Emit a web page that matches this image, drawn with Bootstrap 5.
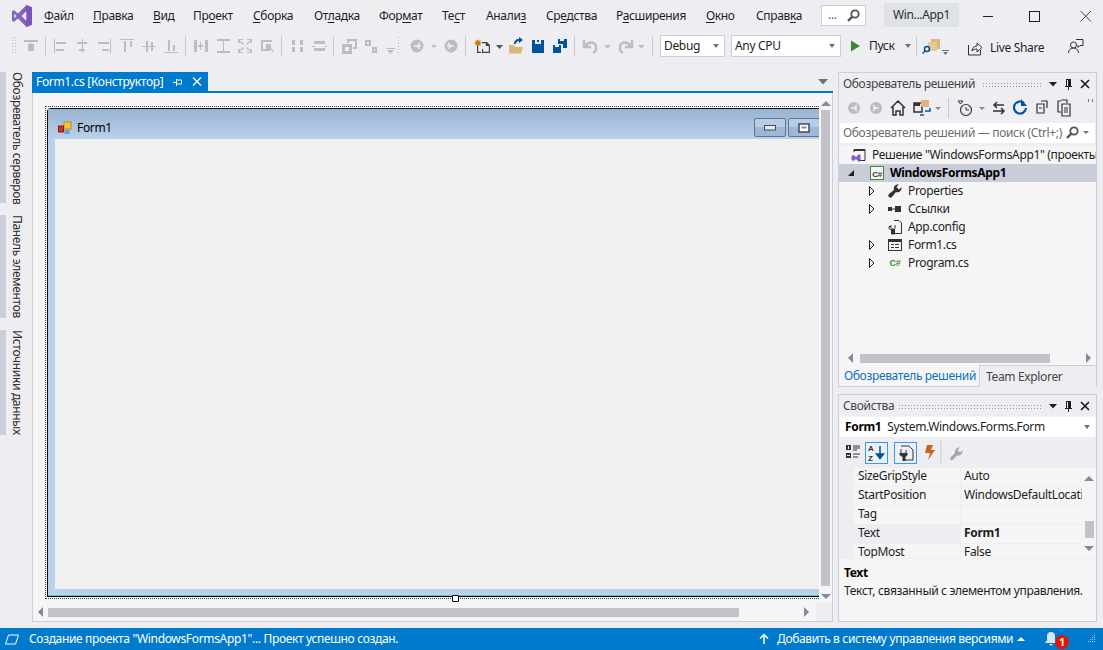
<!DOCTYPE html>
<html lang="ru"><head><meta charset="utf-8"><title>VS</title>
<link rel="stylesheet" href="https://cdn.jsdelivr.net/npm/bootstrap@5.3.0/dist/css/bootstrap.min.css">
<style>
html,body{height:650px;overflow:hidden;background:#eeeef2;}
body{font:12px/16px "Noto Sans",sans-serif;letter-spacing:-.34px;color:#1e1e1e;}
svg{display:block;flex:none;}
.vs-app{height:650px;}
.menu-row{height:32px;}
.logo-cell{width:44px;padding-left:12px;}
.menu-grid{display:grid;grid-template-columns:49px 60px 40px 60px 61px 65px 63px 44px 60px 70px 90px 50px 65px;width:777px;}
.menu-grid u{text-underline-offset:2px;text-decoration-thickness:1px;}
.search-mini{width:45px;height:21px;background:#fff;border:1px solid #cccedb;padding-left:6px;padding-right:5px;margin-top:-2px;color:#555;}
.sln-name{width:75px;height:24px;background:#dfe3e6;margin-left:18px;color:#2d2d30;margin-top:-2px;}
.win-btns{margin-left:24px;}
.tool-row{height:28px;}
.combo{height:22px;background:#fff;border:1px solid #cccedb;padding:0 5px 0 3px;}
.combo-debug{width:65px;margin-left:0;}
.combo-cpu{width:110px;margin-left:6px;}
.caret-g{width:0;height:0;border-left:3.5px solid transparent;border-right:3.5px solid transparent;border-top:4px solid #717171;flex:none;}
.caret-w{width:0;height:0;border-left:4px solid transparent;border-right:4px solid transparent;border-bottom:4px solid #fff;flex:none;}
.run-lbl{margin-left:8px;width:36px;}
.ls-lbl{margin-left:7px;width:78px;}
.main-row{height:550px;margin-top:12px;}
.side-tabs{width:32px;}
.side-item{display:flex;}
.side-strip{width:6px;background:#cccedb;}
.side-txt{writing-mode:vertical-rl;margin-left:5px;line-height:13px;white-space:nowrap;color:#2d2d30;}
.side-a{height:131px;}.side-b{height:103px;margin-top:12px;}.side-c{height:105px;margin-top:12px;}
.doc-pane{width:801px;}
.doc-head{height:19px;}
.doc-tab{width:176px;background:#007acc;color:#fff;padding-left:4px;}
.doc-tab span{width:137px;white-space:nowrap;}
.doc-line{height:2px;background:#007acc;}
.doc-body{height:529px;background:#f5f5f5;border:1px solid #cccedb;border-top:0;}
.canvas-zone{height:510px;padding:13px 0 0 12px;overflow:hidden;}
.select-box{width:900px;height:493px;border:1px dotted #444;padding:1px;}
.frame-win{height:489px;border:1px solid #111;border-radius:4px 0 0 0;background:#b9d1ea;padding:0 6px 6px 7px;border-bottom-color:#000;box-shadow:inset 0 -1px 0 #55c8d8;}
.frame-title{height:30px;margin:0 -6px 0 -7px;padding:7px 0 0 10px;background:linear-gradient(#99b4d1,#b9d1ea);color:#000;}
.frame-title span{margin-left:5px;}
.frame-client{height:450px;background:#f0f0f0;}
.cap-btns{padding-left:642px;}
.cap-btn{width:32px;height:19px;border:1px solid #5f7396;border-radius:2px;background:linear-gradient(#b7cde6 50%,#9db8d6 50%);margin-right:2px;flex:none;}
.handle{position:absolute;left:452px;top:595px;width:7px;height:7px;border:1px solid #000;background:#fff;border-radius:1px;}
.vs-strip{width:15px;}
.vs-thumb{width:9px;height:476px;background:#c2c3c9;}
.tri-up{width:0;height:0;border-left:5px solid transparent;border-right:5px solid transparent;border-bottom:5px solid #868999;}
.tri-dn{width:0;height:0;border-left:5px solid transparent;border-right:5px solid transparent;border-top:5px solid #868999;}
.tri-lf{width:0;height:0;border-top:5px solid transparent;border-bottom:5px solid transparent;border-right:5px solid #868999;}
.tri-rt{width:0;height:0;border-top:5px solid transparent;border-bottom:5px solid transparent;border-left:5px solid #868999;}
.hs-row{height:18px;}
.hs-main{padding:0 0 0 5px;}
.hs-thumb{width:691px;height:9px;background:#c2c3c9;margin-left:5px;}
.hs-end{margin-left:65px;}
.hs-corner{width:16px;height:18px;background:#eeeef2;margin-left:6px;}
.right-pane{width:259px;margin-left:5px;}
.sol-pane{height:315px;border:1px solid #cccedb;border-bottom:0;}
.pane-title{height:20px;padding:1px 0 0 4px;color:#444;}
.pane-title .ttl{white-space:nowrap;}
.pane-tools{height:29px;}
.sol-search{height:20px;margin:1px 1px 0 1px;background:#fff;padding-left:3px;color:#6d6d6d;overflow:hidden;white-space:nowrap;}
.sol-search span{width:222px;overflow:hidden;}
.tree-zone{height:205px;margin-top:3px;background:#f5f5f5;}
.tree-row{height:18px;white-space:nowrap;overflow:hidden;}
.tree-sol{padding-left:12px;}
.tree-sol span{margin-left:6px;}
.tree-prj{padding-left:9px;background:#c9ccd9;font-weight:700;color:#000;}
.tree-prj span{margin-left:5px;}
.tree-kid{padding-left:30px;}
.tree-kid span{margin-left:5px;}
.tree-gap{width:18px;flex:none;}
.sol-hs{height:14px;padding:0 5px 0 9px;background:#f5f5f5;}
.sol-hs-thumb{width:190px;height:9px;background:#c2c3c9;margin-left:7px;}
.sol-tail{margin-left:auto;}
.sol-tabs{height:22px;}
.tab-on{width:142px;height:22px;background:#f5f5f5;border:1px solid #cccedb;border-top:0;color:#0e70c0;padding-left:5px;margin-left:-1px;white-space:nowrap;}
.tab-off{flex-grow:1;padding-left:6px;border-top:1px solid #cccedb;border-right:1px solid #cccedb;color:#444;height:22px;margin-right:-1px;}
.prop-pane{height:228px;margin-top:7px;border:1px solid #cccedb;background:#f5f5f5;}
.prop-pane .pane-title{background:#eeeef2;height:21px;}
.prop-sel{height:20px;margin:1px 1px 0 1px;background:#fff;padding:0 5px 0 5px;}
.prop-sel b{color:#000;margin-right:6px;}
.prop-tools{height:31px;background:#eeeef2;}
.prop-grid{height:90px;overflow:hidden;background:#f5f5f5;}
.prop-body{width:243px;background:#eeeef2;padding-left:15px;}
.prop-line{height:19px;}
.prop-name{width:107px;padding-left:4px;background:#f5f5f5;border-bottom:1px solid #eeeef2;border-right:1px solid #eeeef2;height:19px;flex:none;}
.prop-val{width:121px;padding-left:3px;background:#f5f5f5;border-bottom:1px solid #eeeef2;height:19px;overflow:hidden;white-space:nowrap;flex:none;}
.prop-cur{background:#eeeef2;}
.prop-scroll{width:15px;}
.prop-thumb{width:9px;height:17px;background:#c2c3c9;margin-top:40px;margin-bottom:8px;}
.prop-desc{padding:6px 0 0 5px;border-top:1px solid #eeeef2;height:60px;}
.prop-desc b{color:#000;display:block;margin-bottom:2px;}
.state-bar{height:22px;background:#007acc;color:#fff;padding-left:5px;}
.state-msg{margin-left:10px;width:730px;white-space:nowrap;}
.state-vc{margin-left:4px;width:268px;white-space:nowrap;padding-right:20px;}
.bell-wrap{margin-left:4px;width:19px;}
.grip-end{margin-left:8px;}
.badge-one{position:absolute;left:1055px;top:635px;width:14px;height:14px;border-radius:50%;background:#e51400;color:#fff;font:700 10px/14px "Noto Sans",sans-serif;text-align:center;letter-spacing:0;}
</style></head>
<body>
<div class="vs-app d-flex flex-column">
 <div class="menu-row d-flex align-items-center">
  <div class="logo-cell"><svg width="20" height="22" viewBox="0 0 20 22"><path d="M14.5 0 20 2.5v17L14.5 22 6 13.5 2 16.7 0 15.7V6.3l2-1 4 3.2zM14.5 6 9.5 11l5 5zM2.3 8.5v5L4.6 11z" fill="#865fc5"/><path d="M14.5 0 20 2.5v17L14.5 22V16V6z" fill="#7a52b8"/></svg></div>
  <div class="menu-grid">
   <span><u>Ф</u>айл</span><span><u>П</u>равка</span><span><u>В</u>ид</span><span>Пр<u>о</u>ект</span><span><u>С</u>борка</span><span>От<u>л</u>адка</span><span>Фор<u>м</u>ат</span><span>Те<u>с</u>т</span><span>Анали<u>з</u></span><span>Ср<u>е</u>дства</span><span>Р<u>а</u>сширения</span><span><u>О</u>кно</span><span>Справ<u>к</u>а</span>
  </div>
  <div class="search-mini d-flex align-items-center justify-content-between"><span>...</span><svg width="13" height="13" viewBox="0 0 13 13"><circle cx="8" cy="5" r="3.7" fill="none" stroke="#555" stroke-width="1.8"/><path d="M5.3 7.7 1 12" stroke="#555" stroke-width="2.4"/></svg></div>
  <div class="sln-name d-flex align-items-center justify-content-center">Win...App1</div>
  <div class="win-btns d-flex align-items-center">
   <svg width="112" height="16" viewBox="0 0 112 16" fill="none" stroke="#1e1e1e"><path d="M0 8.5h10"/><rect x="46.5" y="3.5" width="10" height="10"/><path d="M97.5 3 108 13.5M108 3 97.5 13.5" stroke="#444"/></svg>
  </div>
 </div>
 <div class="tool-row d-flex align-items-center">
  <svg width="660" height="28" viewBox="0 32 660 28">
   <g fill="#bcbcc1">
    <path d="M12 37h1v1h-1zM15 37h1v1h-1zM12 40h1v1h-1zM15 40h1v1h-1zM12 43h1v1h-1zM15 43h1v1h-1zM12 46h1v1h-1zM15 46h1v1h-1zM12 49h1v1h-1zM15 49h1v1h-1zM12 52h1v1h-1zM15 52h1v1h-1z"/>
    <path d="M24 40h14v2H24zM30 42h1v2h-1zM28 44h6v7h-6z"/>
    <rect x="45" y="36" width="1" height="20" fill="#c9c9d0"/>
    <path d="M54 39h1v14h-1zM56 42h10v2H56zM56 49h8v2h-8z"/>
    <path d="M82 39h1v14h-1zM77 42h10v2H77zM79 49h6v2h-6z"/>
    <path d="M110 39h1v14h-1zM98 42h11v2H98zM102 49h7v2h-7z"/>
    <path d="M120 39h14v1h-14zM124 41h2v11h-2zM130 41h2v6h-2z"/>
    <path d="M142 46h14v1h-14zM146 41h2v11h-2zM151 42h2v9h-2z"/>
    <path d="M164 52h14v1h-14zM168 40h2v11h-2zM173 45h2v6h-2z"/>
    <rect x="185" y="36" width="1" height="20" fill="#c9c9d0"/>
    <path d="M194 40h3v12h-3zM205 40h3v12h-3zM200 42h1v8h-1zM198 45h5v2h-5z"/>
    <path d="M217 39h13v2h-13zM217 51h13v2h-13zM223 41h1v10h-1z"/>
    <path d="M238 39h5v1h-3v3h-2zM252 39h-5v1h3v3h2zM238 53h5v-1h-3v-3h-2zM252 53h-5v-1h3v-3h2zM241 41l3 3-1 1-3-3zM249 41l-3 3 1 1 3-3zM241 51l3-3-1-1-3 3zM249 51l-3-3 1-1 3 3z"/>
    <path d="M261 40h11v2h-9v7h7v2h-9zM266 44h5v5h-5z"/><path d="M270 49l3 3 1-1-3-3z"/>
    <rect x="281" y="36" width="1" height="20" fill="#c9c9d0"/>
    <path d="M292 40h3v5h-3zM292 47h3v5h-3zM300 40h3v5h-3zM300 47h3v5h-3z"/>
    <path d="M314 41h11v3h-11zM314 48h11v3h-11zM312 46h3v1h-3zM324 46h3v1h-3z"/>
    <rect x="333" y="36" width="1" height="20" fill="#c9c9d0"/>
    <path d="M342 44h10v10h-10zM345 47v4h4v-4zM347 39h10v10h-4v-2h2v-6h-6v2h-2z" fill-rule="evenodd"/>
    <path d="M365 40h6v6h-6zM367 42v2h2v-2zM372 47h5v6h-5zM374 49v2h1v-2z" fill-rule="evenodd"/>
    <path d="M386 48h9v1h-9zM387 50h7l-3.500 4z"/>
    <path d="M398 37h1v1h-1zM398 40h1v1h-1zM398 43h1v1h-1zM398 46h1v1h-1zM398 49h1v1h-1zM398 52h1v1h-1z"/>
    <circle cx="417" cy="46" r="6.500"/><circle cx="451" cy="46" r="6.500"/>
    <path d="M431 45h6l-3 3zM638 45h7l-3.500 3.500zM604 45h7l-3.500 3.500z"/>
    <rect x="465" y="36" width="1" height="20" fill="#c9c9d0"/>
    <rect x="574" y="36" width="1" height="20" fill="#c9c9d0"/>
    <rect x="652" y="36" width="1" height="20" fill="#c9c9d0"/>
   </g>
   <path d="M420 43l-3 3 3 3M414 46h7" fill="none" stroke="#eeeef2" stroke-width="1.500"/>
   <path d="M448 43l3 3-3 3M454 46h-7" fill="none" stroke="#eeeef2" stroke-width="1.500"/>
   <path d="M584 40v7h7M585 47c3-6 10-6 11 0 .5 3-1 5-3 6" fill="none" stroke="#bcbcc1" stroke-width="2.500"/>
   <path d="M632 40v7h-7M631 47c-3-6-10-6-11 0-.5 3 1 5 3 6" fill="none" stroke="#bcbcc1" stroke-width="2.500"/>
   <g>
    <path d="M478 39l1 2 2-1-1 2 2 1-2 1 1 2-2-1-1 2-1-2-2 1 1-2-2-1 2-1-1-2 2 1z" fill="#c27d1a"/>
    <path d="M482 42h5l3 3v8h-8v-4h1.200v2.800h5.600V46h-3v-2.800h-3.800zM477 46h1.200v5.800H481V53h-4z" fill="#424242"/>
    <path d="M496 45h7l-3.500 4z" fill="#555"/>
    <path d="M509 45h5l1 2h8l-2 6.500h-12z" fill="#dcb67a"/>
    <path d="M514 44c0-3 2-5 5-5v-2l4 3-4 3v-2c-2 0-3 1-3 3z" fill="#00539c"/>
    <path d="M532 40h3v4h6v-4h3v13h-12zM537 40h2v2h-2z" fill="#00539c"/>
    <path d="M553 45h8v8h-8zM555 45v2h4v-2z" fill="#00539c" fill-rule="evenodd"/><path d="M558 39h9v9h-4v-4h-5zM560 39v2h4v-2z" fill="#00539c" fill-rule="evenodd"/>
   </g>
  </svg>
  <div class="combo combo-debug d-flex align-items-center justify-content-between"><span>Debug</span><i class="caret-g"></i></div>
  <div class="combo combo-cpu d-flex align-items-center justify-content-between"><span>Any CPU</span><i class="caret-g"></i></div>
  <svg class="ms-2" width="12" height="14" viewBox="0 0 12 14"><path d="M2 1.500 11 7 2 12.500z" fill="#388a34"/></svg>
  <span class="run-lbl">Пуск</span><i class="caret-g"></i>
  <svg class="ms-1" width="49" height="24" viewBox="0 0 49 24"><path d="M1.500 2v20" stroke="#c9c9d0"/><path d="M16 5h9v10h-9z" fill="#dcb67a"/><path d="M13 8h9v9h-9z" fill="#e8c997"/><circle cx="12" cy="15" r="2.500" fill="none" stroke="#00539c" stroke-width="1.500"/><path d="M10 17l-2.500 2.500" stroke="#00539c" stroke-width="1.500"/><path d="M27 16h7v1h-7zM28 18h5l-2.500 3z" fill="#717171"/></svg>
  <svg width="15" height="15" viewBox="0 0 15 15" class="ms-1 mt-1"><path d="M.5 4v10h12V9" fill="none" stroke="#333"/><path d="M4 10c0-3 2-5 5-5V2l5 4.500L9 11V8c-2 0-4 .5-5 2z" fill="none" stroke="#333"/></svg>
  <span class="ls-lbl mt-1">Live Share</span>
  <svg width="16" height="16" viewBox="0 0 16 16" fill="none" stroke="#333"><circle cx="5.500" cy="7" r="3"/><path d="M.5 15c0-3 2-5 5-5s5 2 5 5M8 1.500h7v6h-3l-2 2V7"/></svg>
 </div>
 <div class="main-row d-flex">
  <div class="side-tabs">
   <div class="side-item side-a"><div class="side-strip"></div><div class="side-txt">Обозреватель серверов</div></div>
   <div class="side-item side-b"><div class="side-strip"></div><div class="side-txt">Панель элементов</div></div>
   <div class="side-item side-c"><div class="side-strip"></div><div class="side-txt">Источники данных</div></div>
  </div>
  <div class="doc-pane">
   <div class="doc-head d-flex align-items-center justify-content-between">
    <div class="doc-tab d-flex align-items-center h-100"><span>Form1.cs [Конструктор]</span>
     <svg width="32" height="12" viewBox="0 0 32 12" fill="none" stroke="#fff"><path d="M3 6.500H0M3.500 3v7M3.500 4h5v4h-5z"/><path d="M20 1.500l8 8M28 1.500l-8 8" stroke-width="1.300"/></svg></div>
    <svg class="me-1" width="12" height="8" viewBox="0 0 12 8"><path d="M1 1h10L6 6.500z" fill="#717171"/></svg>
   </div>
   <div class="doc-line"></div>
   <div class="doc-body">
    <div class="d-flex">
     <div class="canvas-zone flex-grow-1">
      <div class="select-box"><div class="frame-win">
       <div class="frame-title d-flex align-items-center">
        <svg width="14" height="14" viewBox="0 0 14 14"><rect x="6" y="1" width="7" height="7" fill="#f3c53b" stroke="#b88a10"/><rect x=".5" y="5" width="5" height="6" fill="#c8312b" stroke="#8a1d18"/><rect x="6.500" y="9" width="5" height="4" fill="#6a9be0"/></svg>
        <span>Form1</span>
        <div class="cap-btns d-flex align-items-center">
         <div class="cap-btn d-flex align-items-center justify-content-center"><svg width="12" height="6" viewBox="0 0 12 6"><rect x=".5" y=".5" width="11" height="4.500" fill="#e8e8e8" stroke="#444a5a"/></svg></div>
         <div class="cap-btn d-flex align-items-center justify-content-center"><svg width="12" height="10" viewBox="0 0 12 10"><rect x="1" y="1" width="10" height="8" fill="#fff" stroke="#444a5a" stroke-width="1.500"/><rect x="3.500" y="3.500" width="5" height="2" fill="#7f8ea8"/></svg></div>
        </div>
       </div>
       <div class="frame-client"></div>
      </div></div>
     </div>
     <div class="vs-strip d-flex flex-column align-items-center pt-1"><i class="tri-up mt-1"></i><div class="vs-thumb mt-1"></div><i class="tri-dn mt-2"></i></div>
    </div>
    <div class="hs-row d-flex align-items-center">
     <div class="hs-main d-flex align-items-center"><i class="tri-lf"></i><div class="hs-thumb"></div><i class="tri-rt hs-end"></i></div>
     <div class="hs-corner ms-auto"></div>
    </div>
   </div>
  </div>
  <div class="right-pane">
   <div class="sol-pane">
    <div class="pane-title d-flex align-items-center">
     <span class="ttl">Обозреватель решений</span>
     <svg class="ms-auto" width="113" height="14" viewBox="0 0 113 14"><defs><pattern id="dotsA" width="3" height="3" patternUnits="userSpaceOnUse"><rect width="1" height="1" fill="#999"/></pattern></defs><rect x="0" y="4" width="58" height="6" fill="url(#dotsA)"/><path d="M66 5h8l-4 4.500z" fill="#1e1e1e"/><path d="M83 2h5v7h1v1h-3v3h-1v-3h-3V9h1zM84 3v6h1V3z" fill="#1e1e1e" fill-rule="evenodd"/><path d="M98 3l8 8M106 3l-8 8" stroke="#1e1e1e" stroke-width="1.700"/></svg>
    </div>
    <div class="pane-tools d-flex align-items-center">
     <svg width="257" height="24" viewBox="839 96 257 24">
      <circle cx="854" cy="108" r="6" fill="#bcbcc1"/><circle cx="876" cy="108" r="6" fill="#bcbcc1"/>
      <path d="M857 105l-3 3 3 3M851 108h6M873 105l3 3-3 3M879 108h-6" fill="none" stroke="#eeeef2" stroke-width="1.300"/>
      <path d="M891 108l7-7 7 7M893 107v8h3v-4h4v4h3v-8" fill="none" stroke="#333" stroke-width="1.500"/>
      <path d="M914 103h8v9h-8z" fill="none" stroke="#333" stroke-width="1.500"/><path d="M914 103h6v3h-6z" fill="#333"/><path d="M921 100h8v7h-8z" fill="#dcb67a"/><path d="M925 111h5v-3M924 115h-4" stroke="#00539c" fill="none" stroke-width="1.500"/>
      <path d="M935 107h6l-3 3z" fill="#8a8a8a"/><path d="M948.500 98v20" stroke="#c9c9d0"/>
      <circle cx="966" cy="110" r="5.500" fill="none" stroke="#333" stroke-width="1.200"/><path d="M966 107v3h3M958 101h5l-2.500 3z" fill="none" stroke="#333"/>
      <path d="M979 107h6l-3 3z" fill="#8a8a8a"/>
      <path d="M1004 105h-10M997 102l-3 3 3 3M993 111h11M1001 108l3 3-3 3" fill="none" stroke="#333" stroke-width="1.500"/>
      <path d="M1024 103a6 6 0 1 0 2 5" fill="none" stroke="#00539c" stroke-width="2.200"/><path d="M1021 99v7h6z" fill="#00539c"/>
      <path d="M1041 101h6v7M1037 104h7v9h-7zM1039 108h3" fill="none" stroke="#333" stroke-width="1.200"/>
      <path d="M1061 101h-3v11h3M1062 104h8v12h-8zM1064 108h4M1064 110h4M1064 112h4M1061 100h6v3" fill="none" stroke="#333" stroke-width="1.200"/>
      <path d="M1088 99h1v3h-1zM1092 99h1v3h-1z" fill="#777"/>
     </svg>
    </div>
    <div class="sol-search d-flex align-items-center justify-content-between"><span>Обозреватель решений — поиск (Ctrl+;)</span>
     <svg class="me-1" width="26" height="14" viewBox="0 0 26 14"><circle cx="9" cy="5" r="3.700" fill="none" stroke="#555" stroke-width="1.800"/><path d="M6.300 7.700 2 12" stroke="#555" stroke-width="2.400"/><path d="M18 5h6l-3 3z" fill="#777"/></svg></div>
    <div class="tree-zone">
     <div class="tree-row tree-sol d-flex align-items-center">
      <svg width="15" height="14" viewBox="0 0 15 14"><path d="M3 4V1.500h11v11H9" fill="none" stroke="#333"/><path d="M3 1h11v2H3z" fill="#333"/><path d="M.5 8l2-1 2.500 2 3-3 1.500 1v6l-1.500 1-3-3-2.500 2-2-1z" fill="#865fc5"/></svg>
      <span>Решение "WindowsFormsApp1" (проекты: 1 из 1)</span></div>
     <div class="tree-row tree-prj d-flex align-items-center">
      <svg width="21" height="10" viewBox="0 0 21 10"><path d="M6 2v6H0z" fill="#1e1e1e"/></svg>
      <svg width="16" height="16" viewBox="0 0 16 16"><rect x="1.500" y="1.500" width="13" height="13" fill="#f6f6f6" stroke="#388a34"/><text x="8" y="11.500" text-anchor="middle" font-size="8" font-family="Liberation Sans" letter-spacing="-.3" fill="#333">C#</text></svg>
      <span>WindowsFormsApp1</span></div>
     <div class="tree-row tree-kid d-flex align-items-center">
      <svg width="18" height="10" viewBox="0 0 18 10"><path d="M.5.5l4.500 4.500L.5 9.500z" fill="#f5f5f5" stroke="#1e1e1e"/></svg>
      <svg width="16" height="16" viewBox="0 0 16 16"><path d="M2 14c-1-1-1-2 0-3l5-4c-1-3 1-6 5-5.500L9.500 4l2.500 2.500L14.500 4c.5 4-2.500 6-5.500 5l-4 5c-1 1-2 1-3 0z" fill="#333"/></svg>
      <span>Properties</span></div>
     <div class="tree-row tree-kid d-flex align-items-center">
      <svg width="18" height="10" viewBox="0 0 18 10"><path d="M.5.5l4.500 4.500L.5 9.500z" fill="#f5f5f5" stroke="#1e1e1e"/></svg>
      <svg width="16" height="16" viewBox="0 0 16 16"><path d="M1 6h4v4H1zM8 5h6v6H8zM5 7.500h3v1H5z" fill="#333"/></svg>
      <span>Ссылки</span></div>
     <div class="tree-row tree-kid d-flex align-items-center">
      <div class="tree-gap"></div>
      <svg width="16" height="16" viewBox="0 0 16 16"><path d="M7 1.500h5l2.500 2.500v10.500H7.500M4 7.500H2v2l2.500 1.500V15" fill="none" stroke="#333"/><path d="M4 6v3.500M8 6v3.500M4.500 10h3v5h-3z" stroke="#333" fill="#333"/></svg>
      <span>App.config</span></div>
     <div class="tree-row tree-kid d-flex align-items-center">
      <svg width="18" height="10" viewBox="0 0 18 10"><path d="M.5.5l4.500 4.500L.5 9.500z" fill="#f5f5f5" stroke="#1e1e1e"/></svg>
      <svg width="16" height="16" viewBox="0 0 16 16"><rect x="1.500" y="2.500" width="13" height="11" fill="none" stroke="#333"/><path d="M1 3h14v2H1zM4 7h3v1H4zM4 10h3v1H4zM8 7h4v1H8zM8 10h4v1H8z" fill="#333"/></svg>
      <span>Form1.cs</span></div>
     <div class="tree-row tree-kid d-flex align-items-center">
      <svg width="18" height="10" viewBox="0 0 18 10"><path d="M.5.5l4.500 4.500L.5 9.500z" fill="#f5f5f5" stroke="#1e1e1e"/></svg>
      <svg width="16" height="16" viewBox="0 0 16 16"><text x="8" y="11" text-anchor="middle" font-size="9" font-weight="700" font-family="Liberation Sans" letter-spacing="-.3" fill="#388a34">C#</text></svg>
      <span>Program.cs</span></div>
    </div>
    <div class="sol-hs d-flex align-items-center"><i class="tri-lf"></i><div class="sol-hs-thumb"></div><i class="tri-rt sol-tail"></i></div>
    <div class="sol-tabs d-flex"><div class="tab-on d-flex align-items-center">Обозреватель решений</div><div class="tab-off d-flex align-items-center">Team Explorer</div></div>
   </div>
   <div class="prop-pane">
    <div class="pane-title d-flex align-items-center">
     <span class="ttl">Свойства</span>
     <svg class="ms-auto" width="197" height="14" viewBox="0 0 197 14"><defs><pattern id="dotsB" width="3" height="3" patternUnits="userSpaceOnUse"><rect width="1" height="1" fill="#999"/></pattern></defs><rect x="0" y="4" width="142" height="6" fill="url(#dotsB)"/><path d="M150 5h8l-4 4.500z" fill="#1e1e1e"/><path d="M167 2h5v7h1v1h-3v3h-1v-3h-3V9h1zM168 3v6h1V3z" fill="#1e1e1e" fill-rule="evenodd"/><path d="M182 3l8 8M190 3l-8 8" stroke="#1e1e1e" stroke-width="1.700"/></svg>
    </div>
    <div class="prop-sel d-flex align-items-center"><b>Form1</b><span>System.Windows.Forms.Form</span><i class="caret-g ms-auto"></i></div>
    <div class="prop-tools d-flex align-items-center">
     <svg width="257" height="26" viewBox="839 439 257 26">
      <path d="M846 444h5v5h-5zM846 452h5v5h-5zM848 445v3h1v-3zM847 454v1h3v-1z" fill="#333" fill-rule="evenodd"/><path d="M853 445h7M853 447h7M853 449h4M853 453h7M853 456h5" stroke="#333"/>
      <rect x="865.500" y="441.500" width="22" height="21" fill="#eef0f6" stroke="#3399ff"/>
      <text x="868" y="450" font-size="8" font-weight="700" font-family="Liberation Sans" fill="#333">A</text><text x="868" y="460" font-size="8" font-weight="700" font-family="Liberation Sans" fill="#333">Z</text>
      <path d="M880 445v12M876.500 453l3.500 4.500 3.500-4.500z" stroke="#00539c" fill="#00539c" stroke-width="1.500"/>
      <rect x="894.500" y="441.500" width="22" height="21" fill="#eef0f6" stroke="#3399ff"/>
      <path d="M901 445h8l4 4v10h-9M901 452v-4M906 452v-3" fill="none" stroke="#333"/><path d="M899.500 452h8v2l-2 2v4h-3v-4l-3-2z" fill="#333"/>
      <path d="M927 444h6l-2 5h4l-7 10 2-7h-5z" fill="#c8641d"/>
      <path d="M941 440v22" stroke="#c9c9d0"/>
      <path d="M951 459c-1-1-1-2 0-3l4-4c-.5-3 1.500-6 5-5.500l-2.500 2.500 2.500 2.500 2.500-2.500c.5 4-2.500 6-5.500 5.500l-4 4c-1 1-1.500 1-2.500.5z" fill="#a5a5aa"/>
     </svg>
    </div>
    <div class="prop-grid d-flex">
     <div class="prop-body">
      <div class="prop-line d-flex"><div class="prop-name">SizeGripStyle</div><div class="prop-val">Auto</div></div>
      <div class="prop-line d-flex"><div class="prop-name">StartPosition</div><div class="prop-val">WindowsDefaultLocation</div></div>
      <div class="prop-line d-flex"><div class="prop-name">Tag</div><div class="prop-val"></div></div>
      <div class="prop-line d-flex"><div class="prop-name prop-cur">Text</div><div class="prop-val fw-bold">Form1</div></div>
      <div class="prop-line d-flex"><div class="prop-name">TopMost</div><div class="prop-val">False</div></div>
     </div>
     <div class="prop-scroll d-flex flex-column align-items-center pt-1"><i class="tri-up mt-1"></i><div class="prop-thumb"></div><i class="tri-dn"></i></div>
    </div>
    <div class="prop-desc"><b>Text</b>Текст, связанный с элементом управления.</div>
   </div>
  </div>
 </div>
 <div class="state-bar mt-auto d-flex align-items-center">
  <svg width="14" height="11" viewBox="0 0 14 11"><path d="M3.500 1h10l-3 9H.5z" fill="none" stroke="#fff"/></svg>
  <span class="state-msg">Создание проекта "WindowsFormsApp1"... Проект успешно создан.</span>
  <svg width="10" height="12" viewBox="0 0 10 12"><path d="M5 11V2M1 5.500 5 1.500l4 4" fill="none" stroke="#fff" stroke-width="1.500"/></svg>
  <span class="state-vc d-flex align-items-center justify-content-between ms-2">Добавить в систему управления версиями<i class="caret-w"></i></span>
  <svg width="12" height="16" viewBox="0 0 12 16"><path d="M6 1c3 0 4 2 4 4v4l2 3H0l2-3V5c0-2 1-4 4-4zM4 13h4l-2 2z" fill="#d5e6f5"/></svg>
  <div class="bell-wrap"></div>
  <svg class="grip-end" width="8" height="8" viewBox="0 0 8 8"><path d="M6 0h1v1H6zM4 2h1v1H4zM6 2h1v1H6zM2 4h1v1H2zM4 4h1v1H4zM6 4h1v1H6zM0 6h1v1H0zM2 6h1v1H2zM4 6h1v1H4zM6 6h1v1H6z" fill="#9fd0ee"/></svg>
 </div>
</div>
<div class="handle"></div>
<div class="badge-one">1</div>
</body></html>
